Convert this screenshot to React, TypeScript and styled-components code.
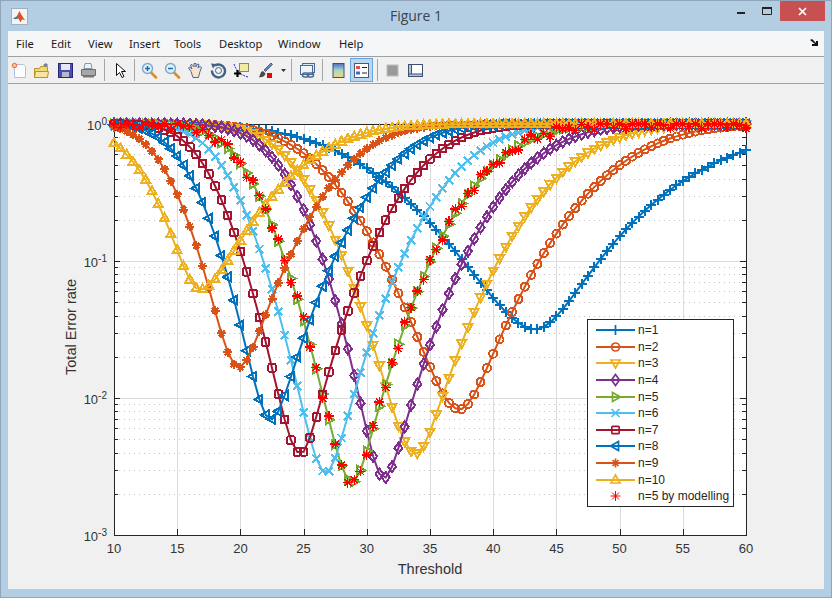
import React from "react";
import styled, { createGlobalStyle } from "styled-components";

const Global = createGlobalStyle`
  html, body { margin: 0; padding: 0; background: #b3cde3; }
  #root { width: 832px; height: 598px; }
`;

const Win = styled.div`
  width: 832px; height: 598px; box-sizing: border-box;
  background: #b3cde3; border: 1px solid #8fa6ba;
  display: flex; flex-direction: column; position: relative; overflow: hidden;
`;
const TitleBar = styled.div`
  height: 30px; flex: none; display: flex; align-items: flex-start; position: relative;
`;
const AppIcon = styled.div`
  width: 15px; height: 15px; margin: 7px 0 0 10px; background: #f4f4f4; border: 1px solid #9fb0c0; display: flex;
`;
const Title = styled.div`
  position: absolute; left: 0; right: 0; top: 5px; text-align: center;
  font: 14px "Open Sans", "Noto Sans", sans-serif; color: #3a4652;
`;
const Controls = styled.div`
  margin-left: auto; margin-right: 6px; display: flex; align-items: flex-start;
`;
const CtlBtn = styled.div<{ $w: number }>`
  width: ${(p) => p.$w}px; height: 20px; display: flex; align-items: center; justify-content: center;
`;
const CloseBtn = styled(CtlBtn)`
  background: #c75050; color: #fff;
`;
const Client = styled.div`
  flex: 1; margin: 0 7px 8px 7px; display: flex; flex-direction: column; background: #f0f0f0;
  min-height: 0;
`;
const MenuBar = styled.div`
  flex: none; background: #f5f6f8; border-bottom: 1px solid #a0a0a0; display: flex; align-items: center;
  padding: 0 8px 1px; gap: 16px; box-sizing: border-box; height: 26px;
  font: 11.2px "Noto Sans", "Open Sans", sans-serif; color: #1a1a1a;
`;
const MenuItem = styled.span<{ $w: number }>`
  width: ${(p) => p.$w}px; white-space: nowrap;
`;
const DockArrow = styled.div`
  margin-left: auto; margin-right: -3px; display: flex;
`;
const ToolBar = styled.div`
  height: 27px; flex: none; background: #f0f0f0; border-bottom: 1px solid #a0a0a0; display: flex; align-items: center;
  box-sizing: border-box;
`;
const Tool = styled.div<{ $w?: number; $active?: boolean; $ml?: number }>`
  width: ${(p) => p.$w ?? 23}px; height: 24px; flex: none; display: flex; align-items: center; justify-content: center;
  box-sizing: border-box; margin-left: ${(p) => p.$ml ?? 0}px;
  ${(p) => (p.$active ? "background:#b9d7f0;border:1px solid #66a7e0;" : "")}
`;
const Sep = styled.div<{ $l: number; $r: number }>`
  width: 1px; height: 22px; background: #a6a6a6; flex: none;
  margin: 0 ${(p) => p.$r}px 0 ${(p) => p.$l}px;
`;
const Figure = styled.div`
  flex: 1; position: relative; background: #f0f0f0; min-height: 0;
`;
const Plot = styled.svg`
  display: block; width: 816px; height: 505px;
  font-family: "Liberation Sans", Arial, sans-serif;
`;
const Legend = styled.div`
  position: absolute; left: 579px; top: 235px; width: 147px; height: 188px; box-sizing: border-box;
  background: #fff; border: 1px solid #262626; padding: 2px 0 0 8px;
  font: 12px "Liberation Sans", Arial, sans-serif; color: #262626;
`;
const LegendRow = styled.div`
  height: 16.6px; display: flex; align-items: center; gap: 3px; white-space: nowrap;
`;

const X = (t: number) => 114 + (t - 10) * 12.64;
const Y = (e: number) => 124 - Math.log10(e) * 137;

function Q(z: number) {
  const t = 1 / (1 + 0.2316419 * Math.abs(z));
  const d = 0.3989423 * Math.exp((-z * z) / 2);
  const p = d * t * (0.3193815 + t * (-0.3565638 + t * (1.781478 + t * (-1.821256 + t * 1.330274))));
  return z >= 0 ? p : 1 - p;
}

type Curve = {
  n: number; c: string; m: string; xm: number; zm: number;
  muL: number; sL: number; muR: number; sR: number;
};
const curves: Curve[] = [
  { n: 1, c: "#0072BD", m: "plus", xm: 43.3, zm: 2.15, muL: 29.6, sL: 6, muR: 57.2, sR: 7.6 },
  { n: 2, c: "#D95319", m: "circle", xm: 37.2, zm: 2.64, muL: 26.1, sL: 3.9, muR: 50, sR: 5.1 },
  { n: 3, c: "#EDB120", m: "down", xm: 33.7, zm: 2.88, muL: 24.2, sL: 3.0, muR: 46.1, sR: 4.6 },
  { n: 4, c: "#7E2F8E", m: "diamond", xm: 31.2, zm: 3.01, muL: 23, sL: 2.8, muR: 42.8, sR: 4.2 },
  { n: 5, c: "#77AC30", m: "right", xm: 28.7, zm: 3.03, muL: 20.1, sL: 2.6, muR: 40, sR: 4 },
  { n: 6, c: "#4DBEEE", m: "x", xm: 26.6, zm: 2.98, muL: 18.5, sL: 2.5, muR: 37.6, sR: 3.9 },
  { n: 7, c: "#A2142F", m: "square", xm: 24.6, zm: 2.88, muL: 17.1, sL: 2.35, muR: 34.5, sR: 3.6 },
  { n: 8, c: "#0072BD", m: "left", xm: 22.2, zm: 2.69, muL: 15.5, sL: 2.4, muR: 32, sR: 3.64 },
  { n: 9, c: "#D95319", m: "star", xm: 19.6, zm: 2.38, muL: 13.8, sL: 2.35, muR: 28.5, sR: 3.66 },
  { n: 10, c: "#EDB120", m: "up", xm: 16.4, zm: 1.85, muL: 11.7, sL: 2.85, muR: 25, sR: 4.6 },
];

const menus: [string, number][] = [
  ["File", 19], ["Edit", 21], ["View", 25], ["Insert", 29], ["Tools", 29], ["Desktop", 43], ["Window", 45], ["Help", 25],
];

function bend(d: number, D: number, s: number, zm: number) {
  if (d <= 0) return d / s;
  if (d >= D) return zm + (d - D) / s;
  const a = (zm - D / s) / (D * D);
  return d / s + a * d * d;
}

function errorAt(c: Curve, t: number) {
  const left = Q(bend(t - c.muL, c.xm - c.muL, c.sL, c.zm));
  const right = Q(bend(c.muR - t, c.muR - c.xm, c.sR, c.zm));
  return Math.min(1, left + right);
}
const steps = Array.from({ length: 101 }, (_, i) => 10 + i * 0.5);

function Mark({ kind, x, y, color, sw = 2 }: { kind: string; x: number; y: number; color: string; sw?: number }) {
  const r = 4;
  const common = { fill: "none", stroke: color, strokeWidth: sw };
  switch (kind) {
    case "plus":
      return <path {...common} d={`M${x - r - 1} ${y}H${x + r + 1}M${x} ${y - r - 1}V${y + r + 1}`} />;
    case "circle":
      return <circle {...common} cx={x} cy={y} r={r} />;
    case "down":
      return <path {...common} d={`M${x - 4.5} ${y - 3}H${x + 4.5}L${x} ${y + 5}Z`} />;
    case "up":
      return <path {...common} d={`M${x - 4.5} ${y + 3}H${x + 4.5}L${x} ${y - 5}Z`} />;
    case "right":
      return <path {...common} d={`M${x - 3} ${y - 4.5}V${y + 4.5}L${x + 5} ${y}Z`} />;
    case "left":
      return <path {...common} d={`M${x + 3} ${y - 4.5}V${y + 4.5}L${x - 5} ${y}Z`} />;
    case "diamond":
      return <path {...common} d={`M${x} ${y - 5.5}L${x + 4} ${y}L${x} ${y + 5.5}L${x - 4} ${y}Z`} />;
    case "square":
      return <rect {...common} x={x - 3.7} y={y - 3.7} width={7.4} height={7.4} rx={1} />;
    case "x":
      return <path {...common} d={`M${x - 4} ${y - 4}L${x + 4} ${y + 4}M${x - 4} ${y + 4}L${x + 4} ${y - 4}`} />;
    case "spark":
      return (
        <path
          {...common}
          d={`M${x - 5} ${y}H${x + 5}M${x} ${y - 5}V${y + 5}M${x - 3.5} ${y - 3.5}L${x + 3.5} ${y + 3.5}M${x - 3.5} ${y + 3.5}L${x + 3.5} ${y - 3.5}`}
        />
      );
    default:
      return (
        <path
          {...common}
          d={`M${x - r - 0.5} ${y}H${x + r + 0.5}M${x} ${y - r - 0.5}V${y + r + 0.5}M${x - 3} ${y - 3}L${x + 3} ${y + 3}M${x - 3} ${y + 3}L${x + 3} ${y - 3}`}
        />
      );
  }
}

const jitter = [0.006, -0.024, 0.016, -0.008, -0.03, 0.022, 0.032, -0.02, 0.008, -0.032, 0.027, 0.003];

function Chart() {
  const minor: number[] = [];
  for (let d = 0; d < 3; d++) for (let k = 2; k < 10; k++) minor.push(124 + 137 * d + 137 * (1 - Math.log10(k)));
  const majorY = [124, 261, 398, 535];
  const xt = [10, 15, 20, 25, 30, 35, 40, 45, 50, 55, 60];
  return (
    <Plot viewBox="8 84 816 505">
      <rect x={114} y={124} width={632} height={411} fill="#fff" />
      {minor.map((y) => (
        <line key={y} x1={114} x2={746} y1={Math.round(y) + 0.5} y2={Math.round(y) + 0.5} stroke="#c4c4c4" strokeDasharray="1 4" strokeWidth={1} />
      ))}
      {majorY.slice(1, 3).map((y) => (
        <line key={y} x1={114} x2={746} y1={y + 0.5} y2={y + 0.5} stroke="#dcdcdc" />
      ))}
      {xt.slice(1, 10).map((t) => (
        <line key={t} x1={Math.round(X(t)) + 0.5} x2={Math.round(X(t)) + 0.5} y1={124} y2={535} stroke="#dcdcdc" />
      ))}
      {xt.map((t) => (
        <React.Fragment key={t}>
          <line x1={Math.round(X(t)) + 0.5} x2={Math.round(X(t)) + 0.5} y1={535} y2={529} stroke="#262626" />
          <text x={X(t)} y={553} textAnchor="middle" fontSize={13} fill="#333">{t}</text>
        </React.Fragment>
      ))}
      {minor.map((y) => (
        <path key={y} d={`M114 ${Math.round(y) + 0.5}h4M746 ${Math.round(y) + 0.5}h-4`} stroke="#262626" fill="none" />
      ))}
      {majorY.map((y) => (
        <path key={y} d={`M114 ${y + 0.5}h6M746 ${y + 0.5}h-6`} stroke="#262626" fill="none" />
      ))}
      <rect x={114.5} y={124.5} width={632} height={411} fill="none" stroke="#262626" />
      {[0, -1, -2, -3].map((e, i) => (
        <text key={e} x={107} y={majorY[i] + 6} textAnchor="end" fontSize={13} fill="#333">
          10<tspan fontSize={10} dy={-5}>{e}</tspan>
        </text>
      ))}
      <text x={430} y={574} textAnchor="middle" fontSize={14.5} fill="#333">Threshold</text>
      <text transform="translate(76 327) rotate(-90)" textAnchor="middle" fontSize={14.5} fill="#333">Total Error rate</text>
      {curves.map((c) => (
        <g key={c.n}>
          <polyline
            points={steps.map((t) => `${X(t).toFixed(1)},${Y(errorAt(c, t)).toFixed(1)}`).join(" ")}
            fill="none" stroke={c.c} strokeWidth={2}
          />
          <g shapeRendering="crispEdges">
            {steps.map((t) => (
              <Mark key={t} kind={c.m} x={X(t)} y={Y(errorAt(c, t))} color={c.c} />
            ))}
          </g>
        </g>
      ))}
      <g shapeRendering="crispEdges">
        {steps.map((t, i) => {
          const e = errorAt(curves[4], t) * Math.pow(10, jitter[i % jitter.length]);
          return <Mark key={t} kind="spark" x={X(t)} y={Y(Math.min(e, 1))} color="#ff0000" sw={1.3} />;
        })}
      </g>
    </Plot>
  );
}

function Sample({ c }: { c?: Curve }) {
  return (
    <svg width={39} height={12} viewBox="0 0 39 12" style={{ flex: "none", overflow: "visible" }}>
      {c ? <line x1={0} x2={39} y1={6} y2={6} stroke={c.c} strokeWidth={2} /> : null}
      <Mark kind={c ? c.m : "spark"} x={19.5} y={6} color={c ? c.c : "#ff0000"} sw={c ? 1.7 : 1} />
    </svg>
  );
}

const I = ({ children, w = 17, h = 17 }: { children: React.ReactNode; w?: number; h?: number }) => (
  <svg width={w} height={h} viewBox={`0 0 ${w} ${h}`}>{children}</svg>
);

const Glass = ({ minus }: { minus?: boolean }) => (
  <I>
    <path d="M10 10.500l5 5" stroke="#d9902a" strokeWidth={2.600} strokeLinecap="round" />
    <circle cx={6.500} cy={6.500} r={5} fill="#dff0fb" stroke="#7fa8c8" strokeWidth={1.400} />
    <path d={minus ? "M4 6.500h5" : "M4 6.500h5M6.500 4v5"} stroke="#1f6fa8" strokeWidth={1.500} />
  </I>
);

export default function App() {
  return (
    <>
      <Global />
      <Win>
        <TitleBar>
          <AppIcon>
            <svg width={15} height={15} viewBox="0 0 16 16">
              <path d="M1 10l4-2 3-6 2 4 4 6-3-1-2 3-2-4z" fill="#d9531e" />
              <path d="M1 10l4-2 2 2-3 1z" fill="#3f7fb5" />
            </svg>
          </AppIcon>
          <Title>Figure 1</Title>
          <Controls>
            <CtlBtn $w={26}>
              <svg width={9} height={8}><rect width={8} height={2} y={5} fill="#222" /></svg>
            </CtlBtn>
            <CtlBtn $w={26}>
              <svg width={11} height={9}><path d="M.5 .5h9v7h-9z" fill="none" stroke="#222" /><rect width={10} height={2} fill="#222" /></svg>
            </CtlBtn>
            <CloseBtn $w={45}>
              <svg width={9} height={9}><path d="M1 1l7 7M8 1l-7 7" stroke="#fff" strokeWidth={1.700} /></svg>
            </CloseBtn>
          </Controls>
        </TitleBar>
        <Client>
          <MenuBar>
            {menus.map(([m, w]) => (
              <MenuItem key={m} $w={w}>{m}</MenuItem>
            ))}
            <DockArrow>
              <svg width={9} height={8}><path d="M0 1l2-1 4 4V2h2v5H2V5h3z" fill="#111" /></svg>
            </DockArrow>
          </MenuBar>
          <ToolBar>
            <Tool>
              <I>
                <path d="M3.500 2.500h9l2 2v11h-11z" fill="#fbfdff" stroke="#a9c4e4" />
                <circle cx={3.500} cy={3.500} r={2.200} fill="#f7c9a0" stroke="#e8603c" strokeWidth={1} />
              </I>
            </Tool>
            <Tool $ml={-1}>
              <I>
                <path d="M1.500 6.500h5l1-2h7v11h-13z" fill="#f0d878" stroke="#b8942e" />
                <path d="M1.500 15.500l1-6h13l-1 6z" fill="#f8e69a" stroke="#b8942e" />
                <path d="M10 3l3-2 2 2-2 2z" fill="#6a7f9f" />
              </I>
            </Tool>
            <Tool $ml={1}>
              <I>
                <rect x={1.500} y={1.500} width={14} height={14} fill="#4a4fb8" stroke="#28287a" />
                <rect x={4} y={2} width={9} height={6} fill="#e8e8f4" />
                <rect x={5} y={10} width={7} height={5} fill="#b8b8c8" />
              </I>
            </Tool>
            <Tool>
              <I>
                <path d="M5 1.500h6l1 5h-8z" fill="#eaf2fa" stroke="#8a98a8" />
                <path d="M1.500 7.500h14v6h-14z" fill="#a8a8a8" stroke="#6c6c6c" />
                <path d="M3 13.500h11v2H3z" fill="#777" />
              </I>
            </Tool>
            <Sep $l={4} $r={4} />
            <Tool>
              <I>
                <path d="M4.500 1.500v12l3-3 2.500 5 2-1-2.500-5h4z" fill="#fff" stroke="#111" />
              </I>
            </Tool>
            <Sep $l={2} $r={3} />
            <Tool><Glass /></Tool>
            <Tool><Glass minus /></Tool>
            <Tool>
              <I>
                <path d="M4 9.500L1.500 6l1-1 2.500 2-1.500-4 1.500-.5L7 5V1.500h2V5l1.500-3 1.500.5L11 6l2-1.500 1.500 1-2 5.500-1 4.500H6z" fill="#fbe2c8" stroke="#4a6a9e" />
              </I>
            </Tool>
            <Tool>
              <I>
                <path d="M5 3.500A6.500 6.500 0 1 1 2 8.500" fill="none" stroke="#3f6284" strokeWidth={2.400} />
                <path d="M1 1.500l5.500.5L3 6.500z" fill="#3f6284" />
                <circle cx={8.500} cy={8.500} r={3} fill="none" stroke="#3f6284" />
              </I>
            </Tool>
            <Tool>
              <I>
                <path d="M1 2c2 6 6 11 14 13" fill="none" stroke="#2a2ae0" strokeDasharray="2 1" />
                <rect x={6.500} y={1.500} width={9} height={8} fill="#f2eaa8" stroke="#8c8c50" />
                <path d="M4.500 8v7M1 11.500h7" stroke="#000" strokeWidth={2.200} />
              </I>
            </Tool>
            <Tool $ml={1}>
              <I>
                <path d="M7 8l7-7 1.500 1.500-7 7z" fill="#6a8cc0" stroke="#4a5f88" />
                <path d="M1.500 15c2 0 1-5 4.500-6l2.500 2.500C8 14 5 16 1.500 15z" fill="#4a4a4a" />
                <rect x={10} y={11} width={5} height={5} fill="#f00000" />
              </I>
            </Tool>
            <Tool $w={10} $ml={1}>
              <svg width={5} height={3}><path d="M0 0h5L2.500 3z" fill="#333" /></svg>
            </Tool>
            <Sep $l={3} $r={4} />
            <Tool>
              <I>
                <rect x={3.500} y={1.500} width={12} height={9} fill="#dce8f4" stroke="#4a6a90" />
                <rect x={1.500} y={3.500} width={12} height={9} fill="#eef4fa" stroke="#4a6a90" />
                <rect x={3.500} y={11} width={6} height={4} rx={2} fill="none" stroke="#4a6a90" strokeWidth={1.500} />
                <rect x={8.500} y={11} width={6} height={4} rx={2} fill="none" stroke="#4a6a90" strokeWidth={1.500} />
              </I>
            </Tool>
            <Sep $l={3} $r={4} />
            <Tool>
              <I>
                <defs>
                  <linearGradient id="cb" x1="0" x2="0" y1="0" y2="1">
                    <stop offset="0" stopColor="#4f6fc8" />
                    <stop offset="0.5" stopColor="#a7dcc4" />
                    <stop offset="1" stopColor="#f6d27a" />
                  </linearGradient>
                </defs>
                <rect x={3} y={1.500} width={11} height={14} fill="url(#cb)" stroke="#3f4f70" />
              </I>
            </Tool>
            <Tool $active>
              <I>
                <rect x={1.500} y={1.500} width={14} height={14} fill="#fff" stroke="#4a5a70" />
                <rect x={3} y={4} width={4} height={3} fill="#e05050" />
                <rect x={3} y={9.500} width={4} height={3} fill="#5060d0" />
                <path d="M9 5.500h5M9 11h5" stroke="#222" strokeWidth={1.200} />
              </I>
            </Tool>
            <Sep $l={4} $r={3} />
            <Tool>
              <I>
                <rect x={3} y={3} width={11} height={11} fill="#9a9a9a" stroke="#bdbdbd" />
              </I>
            </Tool>
            <Tool>
              <I>
                <rect x={1.500} y={2.500} width={14} height={12} fill="#fff" stroke="#3f4f70" />
                <rect x={1.500} y={2.500} width={3} height={12} fill="#aec4d8" stroke="#3f4f70" />
                <rect x={1.500} y={12} width={14} height={2.500} fill="#aec4d8" stroke="#3f4f70" />
              </I>
            </Tool>
          </ToolBar>
          <Figure>
            <Chart />
            <Legend>
              {curves.map((c) => (
                <LegendRow key={c.n}>
                  <Sample c={c} />
                  <span>n={c.n}</span>
                </LegendRow>
              ))}
              <LegendRow>
                <Sample />
                <span>n=5 by modelling</span>
              </LegendRow>
            </Legend>
          </Figure>
        </Client>
      </Win>
    </>
  );
}
